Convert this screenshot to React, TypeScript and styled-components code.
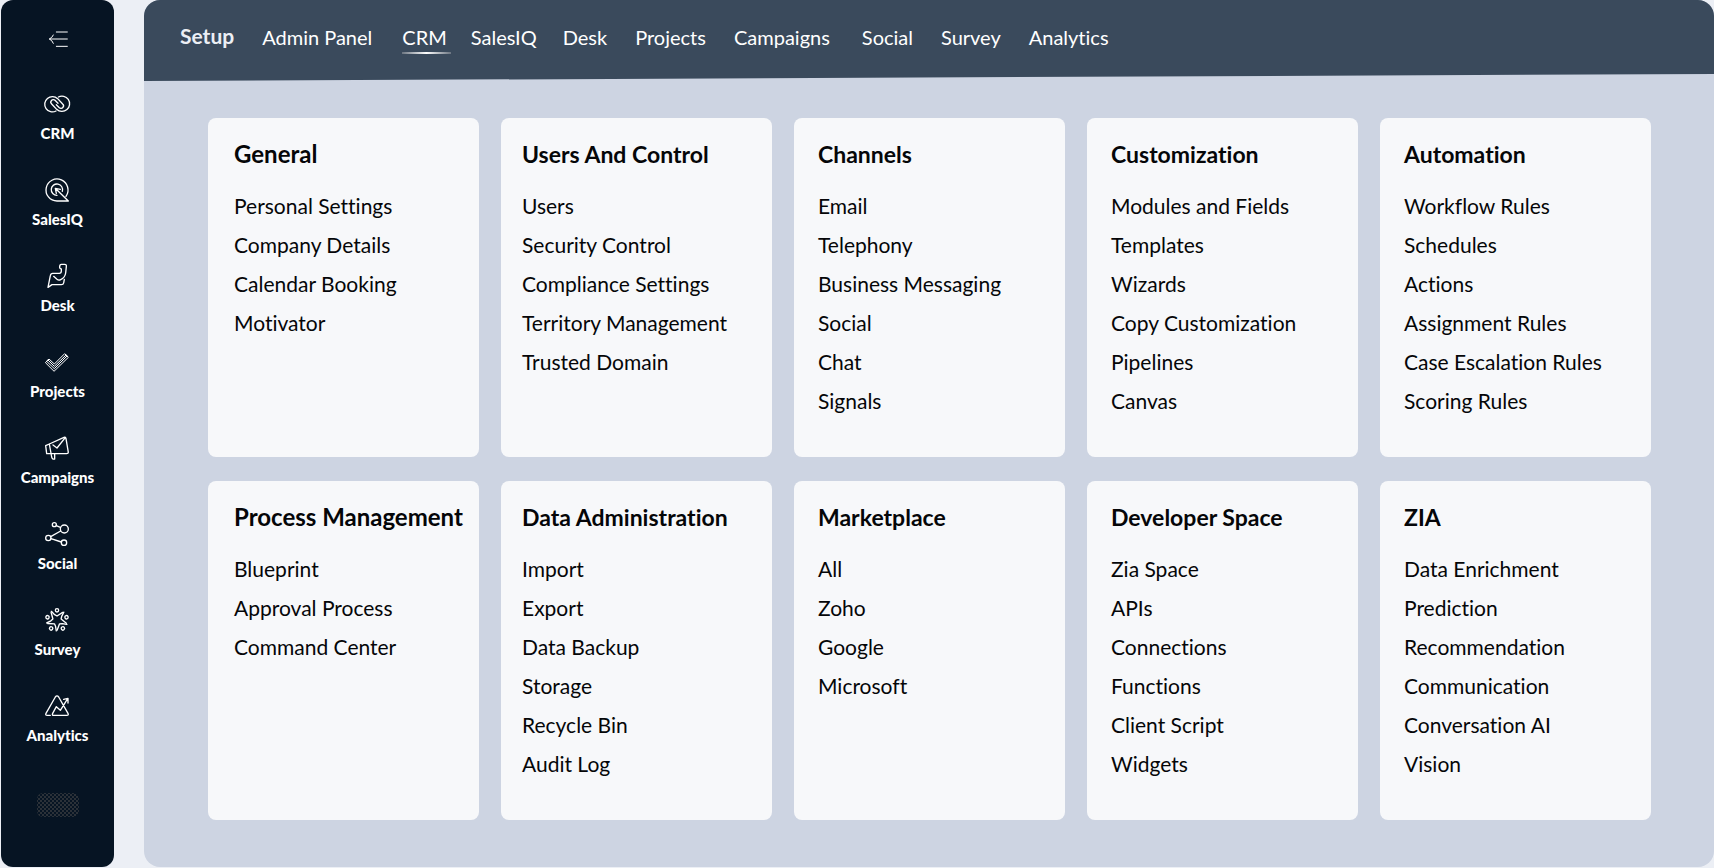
import React from "react";
import styled, { createGlobalStyle } from "styled-components";

const GlobalStyle = createGlobalStyle`
  *, *::before, *::after { box-sizing: border-box; }
  body {
    margin: 0;
    background: #eceff5;
    color: #050608;
    font-family: Lato, "Liberation Sans", sans-serif;
    font-variant-ligatures: no-common-ligatures;
  }
  button { font: inherit; color: inherit; background: none; border: 0; padding: 0; cursor: pointer; }
  ul { list-style: none; margin: 0; padding: 0; }
  a { color: inherit; text-decoration: none; }
`;

const Page = styled.div`
  display: flex;
  gap: 30px;
  min-height: 100vh;
  padding: 0 0 1px 1px;
`;

const Sidebar = styled.aside`
  display: flex;
  flex-direction: column;
  align-items: center;
  flex: none;
  width: 113px;
  padding-top: 24px;
  border-radius: 12px;
  background: #061423;
  color: #fff;
`;

const CollapseButton = styled.button`
  display: flex;
  margin-bottom: 35px;
`;

const Icon = styled.svg`
  display: block;
  width: 30px;
  height: 30px;
  fill: none;
  stroke: currentColor;
  stroke-width: 4;
  stroke-linecap: round;
  stroke-linejoin: round;
`;

const AppList = styled.ul`
  display: flex;
  flex-direction: column;
  gap: 32px;
`;

const AppLink = styled.a`
  display: flex;
  flex-direction: column;
  align-items: center;
  gap: 4px;
  font-size: 15px;
  line-height: 20px;
  font-weight: 900;
`;

const Placeholder = styled.div`
  width: 42px;
  height: 24px;
  margin-top: 48px;
  border-radius: 6px;
  background-image: radial-gradient(#2b3138 1px, transparent 1px), radial-gradient(#2b3138 1px, transparent 1px);
  background-size: 4px 4px;
  background-position: 0 0, 2px 2px;
`;

const Main = styled.main`
  flex: 1;
  min-width: 0;
  border-radius: 16px;
  overflow: hidden;
  background: #cdd4e2;
`;

const Header = styled.header`
  display: flex;
  align-items: flex-start;
  height: 81px;
  padding: 22px 36px 0;
  background: #3a4a5c;
  color: #fff;
  clip-path: polygon(0 0, 100% 0, 100% 74px, 0 81px);
`;

const SetupTitle = styled.h1`
  margin: 0;
  color: #eceff5;
  font-size: 21px;
  line-height: 28px;
  font-weight: 700;
`;

const Tabs = styled.nav`
  display: flex;
`;

const Tab = styled.button<{ $lead: number; $active?: boolean }>`
  position: relative;
  margin-left: ${(p) => p.$lead}px;
  font-size: 20px;
  line-height: 30px;

  ${(p) =>
    p.$active &&
    `&::after {
      content: "";
      position: absolute;
      left: 0;
      right: -4px;
      bottom: -2px;
      height: 2px;
      background: linear-gradient(90deg, #6b7581, #fff 50%, #6b7581);
    }`}
`;

const Grid = styled.div`
  display: grid;
  grid-template-columns: repeat(5, minmax(0, 1fr));
  grid-auto-rows: minmax(339px, auto);
  gap: 24px 22px;
  padding: 37px 63px 47px 64px;
`;

const Card = styled.section<{ $inset: number }>`
  padding: 21px 0 20px ${(p) => p.$inset}px;
  border-radius: 8px;
  background: #f7f8fa;
`;

const CardTitle = styled.h2<{ $large: boolean }>`
  margin: 0 0 17px;
  font-size: ${(p) => (p.$large ? 24 : 23)}px;
  line-height: 30px;
  font-weight: 700;
  white-space: nowrap;
`;

const CardLink = styled.a`
  display: block;
  font-size: 21px;
  line-height: 39px;
  white-space: nowrap;
`;

const loop = "M42 66A23 23 0 1 1 47 29L62 45A7 7 0 0 1 52 56L43 47";

const apps = [
  {
    name: "CRM",
    icon: (
      <>
        <path d={loop} />
        <path d={loop} transform="rotate(180 45.5 45)" />
      </>
    ),
  },
  {
    name: "SalesIQ",
    icon: <path d="M72 64A33 33 0 1 0 45 78H79L42 42M43 55L40 40L55 43M45 61A17 17 0 1 1 61 49" />,
  },
  {
    name: "Desk",
    icon: (
      <path d="M67 55L65 66Q64 71 58 71H30L18 79L25 44Q26 37 32 37H52Q58 37 58 30V24Q52 23 53 17Q53 10 58 10H68Q74 10 73 17L71 36Q69 50 56 56Q50 59 45 55L35 46" />
    ),
  },
  {
    name: "Projects",
    icon: (
      <>
        <path d="M11 46L21 36L37 51L68 20L79 31L37 72Z" strokeWidth="3" />
        <path d="M14 43L37 65L75 27M18 39L37 58L72 24" strokeWidth="3" />
      </>
    ),
  },
  {
    name: "Campaigns",
    icon: (
      <path d="M22 33L66 13Q71 11 72 17L79 58Q79 62 74 62H14L11 38L22 33L29 72Q31 80 38 78V63M33 36L45 45L68 16" />
    ),
  },
  {
    name: "Social",
    icon: (
      <>
        <circle cx="37" cy="17" r="6" />
        <circle cx="67" cy="30" r="12" />
        <circle cx="19" cy="57" r="8" />
        <circle cx="66" cy="71" r="8" />
        <path d="M43 20L55 25M26 53L56 36M27 59L58 69" />
      </>
    ),
  },
  {
    name: "Survey",
    icon: (
      <>
        {[0, 72, 144, 216, 288].map((angle) => (
          <g key={angle} transform={`rotate(${angle} 45 46)`}>
            <circle cx="45" cy="16" r="5" />
            <path d="M28 19L38 29L45 33L62 22" />
          </g>
        ))}
      </>
    ),
  },
  {
    name: "Analytics",
    icon: (
      <path d="M25 73H16Q9 73 12 67L40 18Q45 11 50 18L78 67Q81 73 74 73H35Q29 73 32 67L43 47L55 58L77 23M65 25L78 22V36" />
    ),
  },
];

const tabs = [
  { name: "Admin Panel", lead: 28 },
  { name: "CRM", lead: 30, active: true },
  { name: "SalesIQ", lead: 24 },
  { name: "Desk", lead: 26 },
  { name: "Projects", lead: 28 },
  { name: "Campaigns", lead: 28 },
  { name: "Social", lead: 32 },
  { name: "Survey", lead: 28 },
  { name: "Analytics", lead: 28 },
];

const columnInsets = [26, 21, 24, 24, 24];

const sections = [
  { title: "General", links: ["Personal Settings", "Company Details", "Calendar Booking", "Motivator"] },
  {
    title: "Users And Control",
    links: ["Users", "Security Control", "Compliance Settings", "Territory Management", "Trusted Domain"],
  },
  { title: "Channels", links: ["Email", "Telephony", "Business Messaging", "Social", "Chat", "Signals"] },
  {
    title: "Customization",
    links: ["Modules and Fields", "Templates", "Wizards", "Copy Customization", "Pipelines", "Canvas"],
  },
  {
    title: "Automation",
    links: ["Workflow Rules", "Schedules", "Actions", "Assignment Rules", "Case Escalation Rules", "Scoring Rules"],
  },
  { title: "Process Management", links: ["Blueprint", "Approval Process", "Command Center"] },
  {
    title: "Data Administration",
    links: ["Import", "Export", "Data Backup", "Storage", "Recycle Bin", "Audit Log"],
  },
  { title: "Marketplace", links: ["All", "Zoho", "Google", "Microsoft"] },
  {
    title: "Developer Space",
    links: ["Zia Space", "APIs", "Connections", "Functions", "Client Script", "Widgets"],
  },
  {
    title: "ZIA",
    links: ["Data Enrichment", "Prediction", "Recommendation", "Communication", "Conversation AI", "Vision"],
  },
];

export default function App() {
  return (
    <>
      <GlobalStyle />
      <Page>
        <Sidebar>
          <CollapseButton type="button" aria-label="Collapse sidebar">
            <Icon viewBox="0 0 90 90">
              <path d="M20 45H73M31 33Q27 42 19 45Q27 48 31 58M40 24H73M40 67H73" strokeWidth="3" />
            </Icon>
          </CollapseButton>
          <AppList>
            {apps.map((app) => (
              <li key={app.name}>
                <AppLink href="#">
                  <Icon viewBox="0 0 90 90" aria-hidden="true">
                    {app.icon}
                  </Icon>
                  {app.name}
                </AppLink>
              </li>
            ))}
          </AppList>
          <Placeholder />
        </Sidebar>
        <Main>
          <Header>
            <SetupTitle>Setup</SetupTitle>
            <Tabs>
              {tabs.map((tab) => (
                <Tab key={tab.name} type="button" $lead={tab.lead} $active={tab.active}>
                  {tab.name}
                </Tab>
              ))}
            </Tabs>
          </Header>
          <Grid>
            {sections.map((section, index) => (
              <Card key={section.title} $inset={columnInsets[index % 5]}>
                <CardTitle $large={index % 5 === 0}>{section.title}</CardTitle>
                <ul>
                  {section.links.map((link) => (
                    <li key={link}>
                      <CardLink href="#">{link}</CardLink>
                    </li>
                  ))}
                </ul>
              </Card>
            ))}
          </Grid>
        </Main>
      </Page>
    </>
  );
}
